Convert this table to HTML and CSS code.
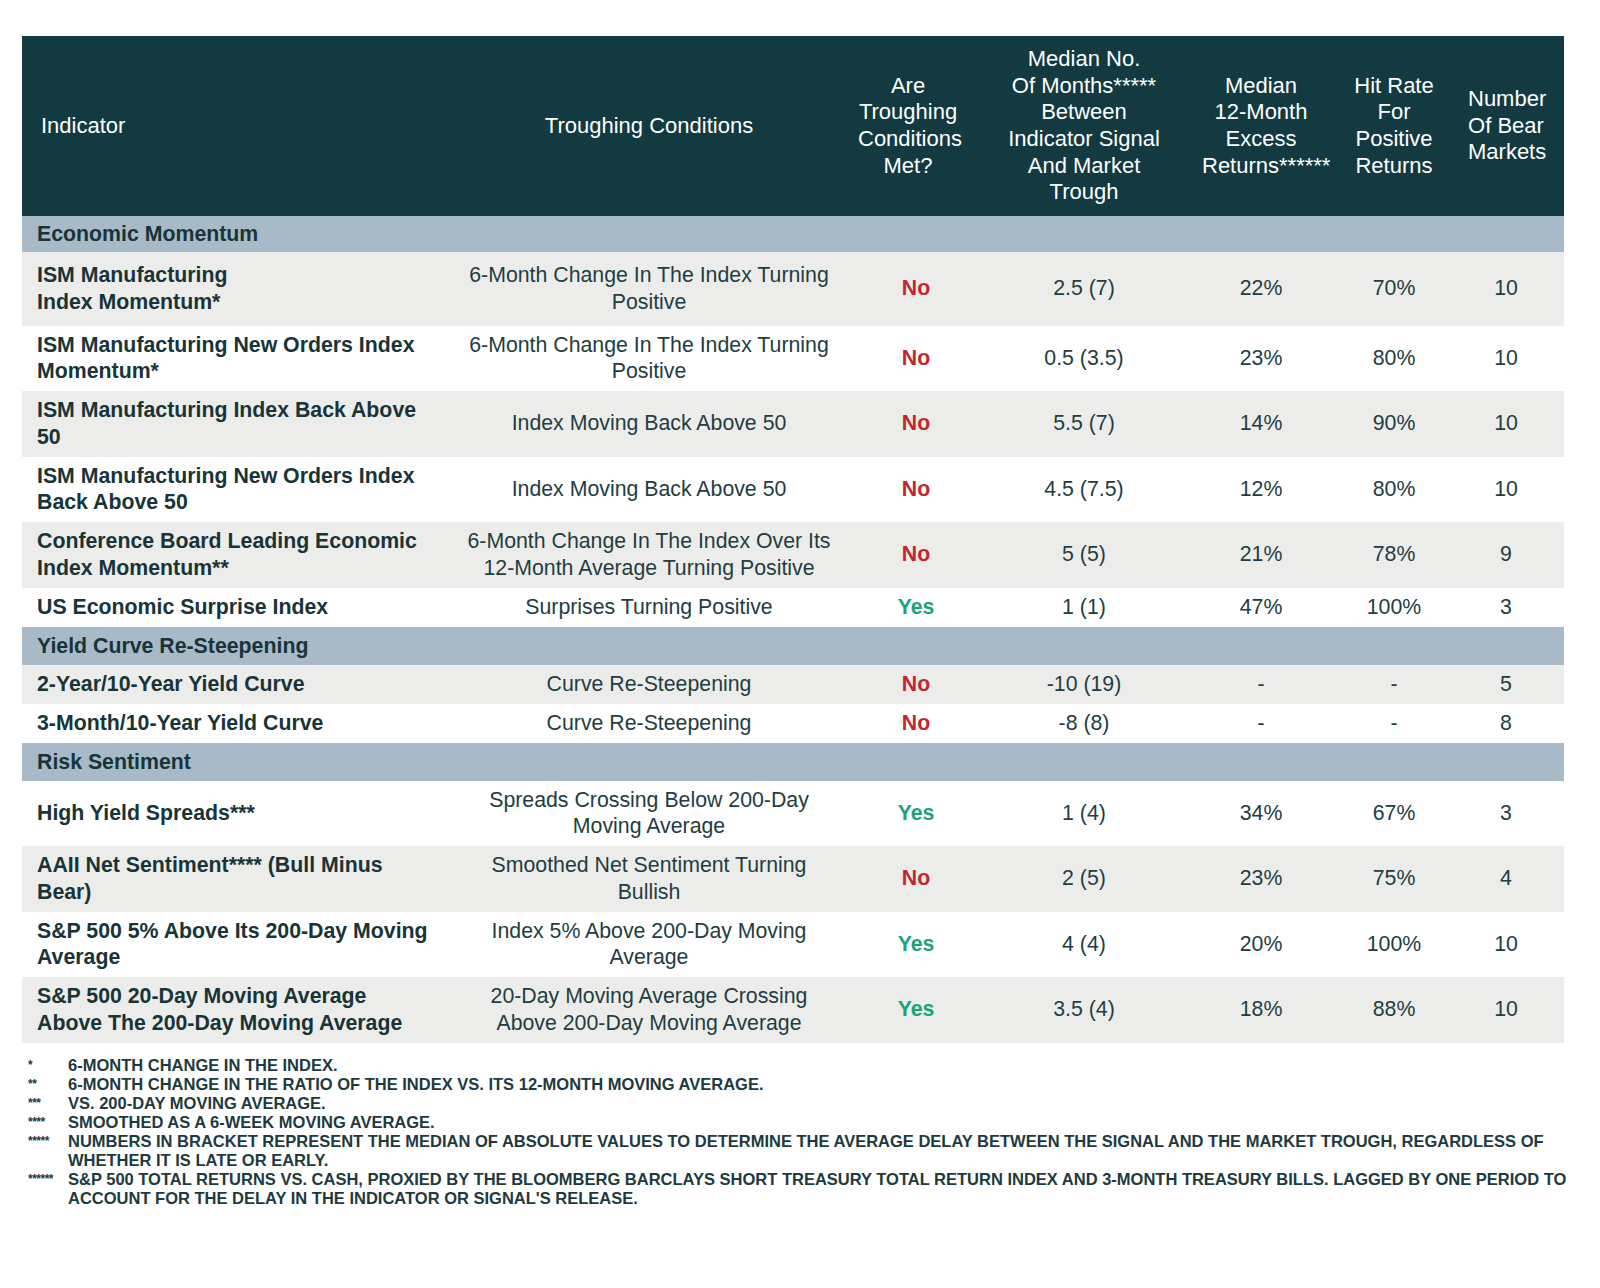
FILE: index.html
```html
<!DOCTYPE html>
<html lang="en">
<head>
<meta charset="utf-8">
<title>Troughing Indicators</title>
<link rel="stylesheet" href="styles.css">
</head>
<body>
<div class="page">
  <table class="grid">
    <colgroup>
      <col class="c1"><col class="c2"><col class="c3"><col class="c4"><col class="c5"><col class="c6"><col class="c7">
    </colgroup>
    <thead>
      <tr>
        <th class="left">Indicator</th>
        <th>Troughing Conditions</th>
        <th class="met-h">Are<br>Troughing<br>Conditions<br>Met?</th>
        <th>Median No.<br>Of Months*****<br>Between<br>Indicator Signal<br>And Market<br>Trough</th>
        <th>Median<br>12-Month<br>Excess<br>Returns******</th>
        <th>Hit Rate<br>For<br>Positive<br>Returns</th>
        <th class="last">Number<br>Of Bear<br>Markets</th>
      </tr>
    </thead>
    <tbody>
      <tr class="band"><td colspan="7">Economic Momentum</td></tr>
      <tr class="shade tall">
        <td class="ind">ISM Manufacturing<br>Index Momentum*</td>
        <td>6-Month Change In The Index Turning<br>Positive</td>
        <td class="no">No</td><td>2.5 (7)</td><td>22%</td><td>70%</td><td class="last">10</td>
      </tr>
      <tr>
        <td class="ind">ISM Manufacturing New Orders Index<br>Momentum*</td>
        <td>6-Month Change In The Index Turning<br>Positive</td>
        <td class="no">No</td><td>0.5 (3.5)</td><td>23%</td><td>80%</td><td class="last">10</td>
      </tr>
      <tr class="shade">
        <td class="ind">ISM Manufacturing Index Back Above<br>50</td>
        <td>Index Moving Back Above 50</td>
        <td class="no">No</td><td>5.5 (7)</td><td>14%</td><td>90%</td><td class="last">10</td>
      </tr>
      <tr>
        <td class="ind">ISM Manufacturing New Orders Index<br>Back Above 50</td>
        <td>Index Moving Back Above 50</td>
        <td class="no">No</td><td>4.5 (7.5)</td><td>12%</td><td>80%</td><td class="last">10</td>
      </tr>
      <tr class="shade">
        <td class="ind">Conference Board Leading Economic<br>Index Momentum**</td>
        <td>6-Month Change In The Index Over Its<br>12-Month Average Turning Positive</td>
        <td class="no">No</td><td>5 (5)</td><td>21%</td><td>78%</td><td class="last">9</td>
      </tr>
      <tr>
        <td class="ind">US Economic Surprise Index</td>
        <td>Surprises Turning Positive</td>
        <td class="yes">Yes</td><td>1 (1)</td><td>47%</td><td>100%</td><td class="last">3</td>
      </tr>
      <tr class="band band-lg"><td colspan="7">Yield Curve Re-Steepening</td></tr>
      <tr class="shade">
        <td class="ind">2-Year/10-Year Yield Curve</td>
        <td>Curve Re-Steepening</td>
        <td class="no">No</td><td>-10 (19)</td><td>-</td><td>-</td><td class="last">5</td>
      </tr>
      <tr>
        <td class="ind">3-Month/10-Year Yield Curve</td>
        <td>Curve Re-Steepening</td>
        <td class="no">No</td><td>-8 (8)</td><td>-</td><td>-</td><td class="last">8</td>
      </tr>
      <tr class="band band-md"><td colspan="7">Risk Sentiment</td></tr>
      <tr>
        <td class="ind">High Yield Spreads***</td>
        <td>Spreads Crossing Below 200-Day<br>Moving Average</td>
        <td class="yes">Yes</td><td>1 (4)</td><td>34%</td><td>67%</td><td class="last">3</td>
      </tr>
      <tr class="shade">
        <td class="ind">AAII Net Sentiment**** (Bull Minus<br>Bear)</td>
        <td>Smoothed Net Sentiment Turning<br>Bullish</td>
        <td class="no">No</td><td>2 (5)</td><td>23%</td><td>75%</td><td class="last">4</td>
      </tr>
      <tr>
        <td class="ind">S&amp;P 500 5% Above Its 200-Day Moving<br>Average</td>
        <td>Index 5% Above 200-Day Moving<br>Average</td>
        <td class="yes">Yes</td><td>4 (4)</td><td>20%</td><td>100%</td><td class="last">10</td>
      </tr>
      <tr class="shade">
        <td class="ind">S&amp;P 500 20-Day Moving Average<br>Above The 200-Day Moving Average</td>
        <td>20-Day Moving Average Crossing<br>Above 200-Day Moving Average</td>
        <td class="yes">Yes</td><td>3.5 (4)</td><td>18%</td><td>88%</td><td class="last">10</td>
      </tr>
    </tbody>
  </table>

  <div class="notes">
    <span class="mark">*</span><span class="note">6-MONTH CHANGE IN THE INDEX.</span>
    <span class="mark">**</span><span class="note">6-MONTH CHANGE IN THE RATIO OF THE INDEX VS. ITS 12-MONTH MOVING AVERAGE.</span>
    <span class="mark">***</span><span class="note">VS. 200-DAY MOVING AVERAGE.</span>
    <span class="mark">****</span><span class="note">SMOOTHED AS A 6-WEEK MOVING AVERAGE.</span>
    <span class="mark">*****</span><span class="note">NUMBERS IN BRACKET REPRESENT THE MEDIAN OF ABSOLUTE VALUES TO DETERMINE THE AVERAGE DELAY BETWEEN THE SIGNAL AND THE MARKET TROUGH, REGARDLESS OF<br>WHETHER IT IS LATE OR EARLY.</span>
    <span class="mark">******</span><span class="note">S&amp;P 500 TOTAL RETURNS VS. CASH, PROXIED BY THE BLOOMBERG BARCLAYS SHORT TREASURY TOTAL RETURN INDEX AND 3-MONTH TREASURY BILLS. LAGGED BY ONE PERIOD TO<br>ACCOUNT FOR THE DELAY IN THE INDICATOR OR SIGNAL'S RELEASE.</span>
  </div>
</div>
</body>
</html>
```

FILE: styles.css
```css
html, body {
  margin: 0;
  padding: 0;
  background: #ffffff;
}

body {
  font-family: "Liberation Sans", Arial, sans-serif;
  color: #223d42;
}

.page {
  padding: 36px 36px 0 22px;
}

.grid {
  width: 1542px;
  border-collapse: collapse;
  table-layout: fixed;
  font-size: 21.3px;
  line-height: 26.5px;
}

.c1 { width: 418px; }
.c2 { width: 418px; }
.c3 { width: 108px; }
.c4 { width: 236px; }
.c5 { width: 118px; }
.c6 { width: 148px; }
.c7 { width: 96px; }

.grid thead th {
  background: #133a40;
  color: #ffffff;
  font-weight: 400;
  font-size: 22px;
  line-height: 26.7px;
  height: 180px;
  box-sizing: border-box;
  padding: 0;
  text-align: center;
  vertical-align: middle;
  white-space: nowrap;
}

.grid thead th.left {
  text-align: left;
  padding-left: 19px;
}

.grid thead th.met-h {
  padding-right: 8px;
}

.grid th.last,
.grid td.last {
  padding-right: 20px;
}

.grid tbody td {
  padding: 6px 0 6.5px;
  text-align: center;
  vertical-align: middle;
  white-space: nowrap;
  color: #223d42;
}

.grid tbody tr.shade td {
  background: #ecedea;
}

.grid tbody tr.tall td {
  padding-top: 10px;
  padding-bottom: 10.5px;
}

.grid tbody td.ind {
  text-align: left;
  padding-left: 15px;
  font-weight: 700;
  color: #173439;
}

.grid tbody tr.band td {
  background: #a8bac7;
  text-align: left;
  padding: 4.5px 0 5px 15px;
  font-weight: 700;
  color: #173439;
}

.grid tbody tr.band-lg td {
  padding-top: 6px;
  padding-bottom: 6px;
}

.grid tbody tr.band-md td {
  padding-top: 5.5px;
  padding-bottom: 5.5px;
}

.grid tbody td.no,
.grid tbody td.yes {
  padding-left: 8px;
  font-weight: 700;
}

.grid tbody td.no {
  color: #c1272d;
}

.grid tbody td.yes {
  color: #1ba37b;
}

.notes {
  display: grid;
  grid-template-columns: 40px 1fr;
  padding: 13px 0 0 6px;
  font-size: 16.5px;
  line-height: 19px;
  font-weight: 700;
  color: #1d3a3f;
}

.notes .mark {
  font-size: 12px;
  line-height: 19px;
  white-space: nowrap;
  letter-spacing: -0.5px;
}

.notes .note {
  white-space: nowrap;
}
```
